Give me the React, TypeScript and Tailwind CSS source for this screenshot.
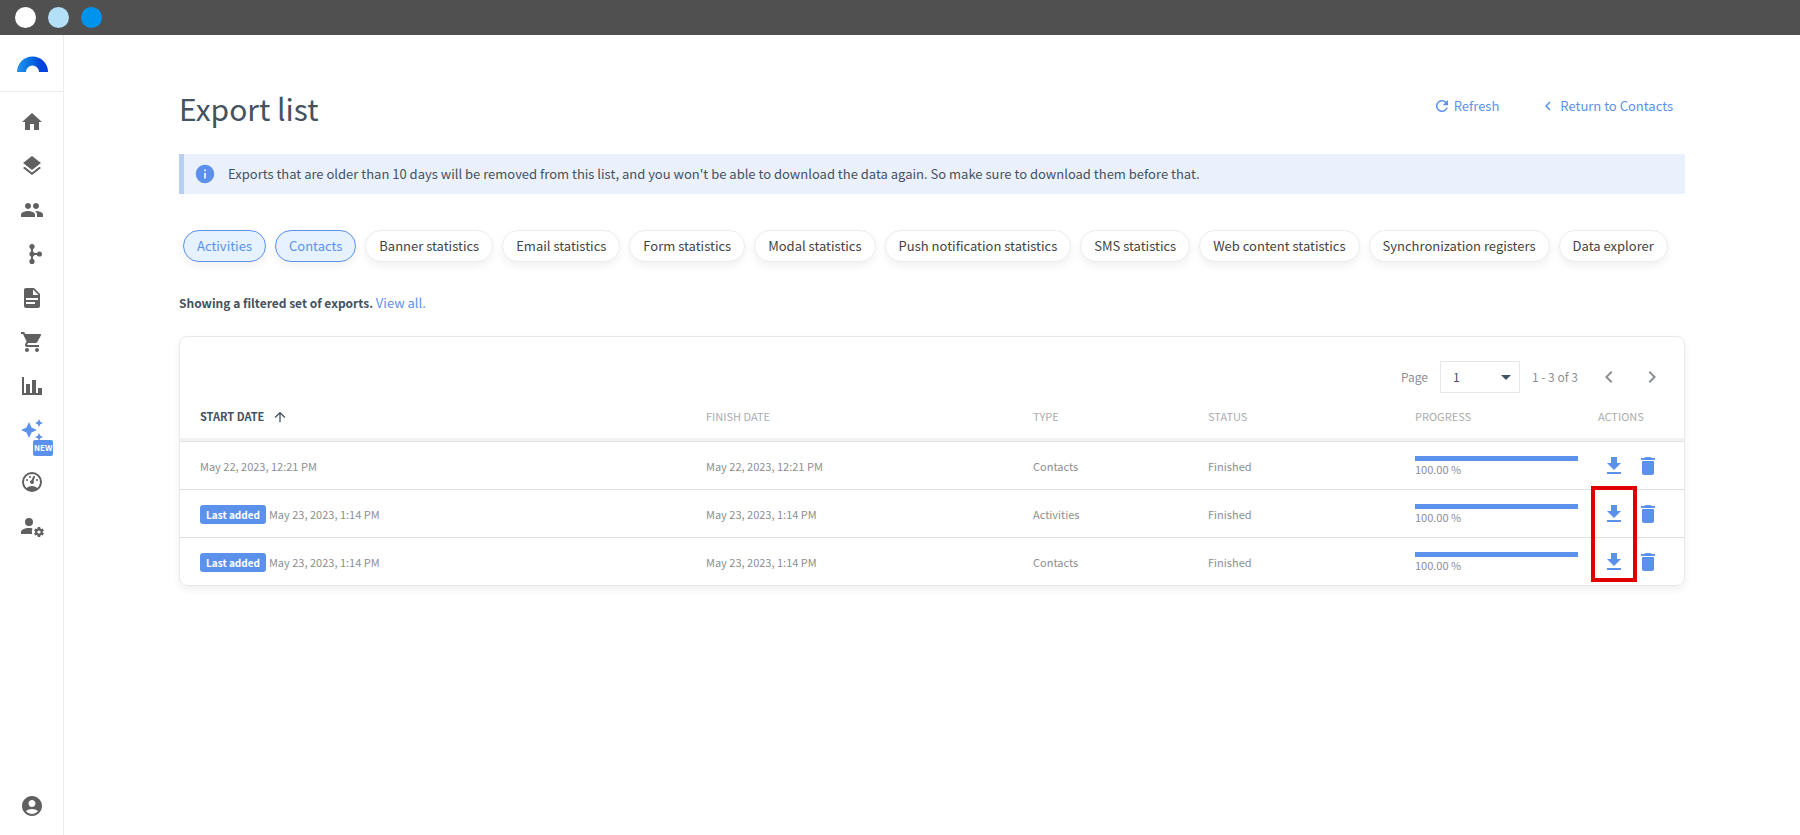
import clsx from "clsx";
import type { ReactNode } from "react";
import {
  MdAccountCircle,
  MdArrowDropDown,
  MdArrowUpward,
  MdAutoAwesome,
  MdChevronLeft,
  MdChevronRight,
  MdDelete,
  MdFileDownload,
  MdHome,
  MdInfo,
  MdLayers,
  MdPeople,
  MdRefresh,
  MdShoppingCart,
} from "react-icons/md";

const Svg = ({ children }: { children: ReactNode }) => (
  <svg viewBox="0 0 24 24" width="24" height="24" fill="currentColor">
    {children}
  </svg>
);

const ScenarioIcon = () => (
  <Svg>
    <circle cx="12" cy="4.6" r="2.6" />
    <circle cx="12" cy="12" r="2.6" />
    <circle cx="12" cy="19.4" r="2.6" />
    <circle cx="19.4" cy="12" r="2.6" />
    <path d="M11 5h2v6h6v2h-6v6h-2z" />
  </Svg>
);

const DocumentIcon = () => (
  <Svg>
    <path d="M13 9h5.5L13 3.5V9M6 2h8l6 6v12a2 2 0 0 1-2 2H6a2 2 0 0 1-2-2V4c0-1.11.89-2 2-2m9 16v-2H6v2h9m3-4v-2H6v2h12z" />
  </Svg>
);

const ChartIcon = () => (
  <Svg>
    <path d="M22 21H2V3h2v16h2v-9h4v9h2V6h4v13h2v-5h4v7z" />
  </Svg>
);

const GaugeIcon = () => (
  <Svg>
    <path
      fillRule="evenodd"
      d="M12 2a10 10 0 1 0 0 20 10 10 0 0 0 0-20m0 2a8 8 0 0 1 8 8c0 2.4-1 4.5-2.7 6-1.4-1.3-3.3-2-5.3-2s-3.8.7-5.3 2C5 16.5 4 14.4 4 12a8 8 0 0 1 8-8z"
    />
    <path d="M14 5.89c-.38.01-.74.26-.9.65l-1.29 3.23-.1.23c-.71.13-1.3.6-1.57 1.26a2 2 0 1 0 3.72 1.48c.26-.66.14-1.42-.29-1.98l.1-.26 1.29-3.21.01-.03c.2-.51-.05-1.09-.56-1.3-.13-.05-.26-.07-.41-.07z" />
    <circle cx="10" cy="7" r="1" />
    <circle cx="7" cy="10" r="1" />
    <circle cx="17" cy="10" r="1" />
  </Svg>
);

const UserSettingsIcon = () => (
  <Svg>
    <path d="M9 4a4 4 0 1 0 0 8 4 4 0 0 0 0-8M9 14c-4.42 0-8 1.79-8 4v2h11.2a7 7 0 0 1 .3-5.6C11.5 14.1 10.2 14 9 14z" />
    <path
      fillRule="evenodd"
      transform="translate(1 1)"
      d="M17 12c-.13 0-.24.09-.26.21l-.19 1.32c-.3.13-.59.29-.85.47l-1.24-.5c-.11 0-.24 0-.31.13l-1 1.73c-.06.11-.04.24.06.32l1.06.82a4.2 4.2 0 0 0 0 1l-1.06.82c-.09.08-.12.21-.06.32l1 1.73c.06.13.19.13.31.13l1.24-.5c.26.18.54.35.85.47l.19 1.32c.02.12.12.21.26.21h2c.11 0 .22-.09.24-.21l.19-1.32c.3-.13.57-.29.84-.47l1.23.5c.13 0 .26 0 .33-.13l1-1.73c.06-.11.03-.24-.06-.32l-1.07-.82a4.2 4.2 0 0 0 0-1l1.06-.82c.09-.08.12-.21.06-.32l-1-1.73c-.06-.13-.19-.13-.32-.13l-1.23.5c-.27-.18-.54-.35-.85-.47l-.19-1.32c-.01-.12-.12-.21-.23-.21h-2m1 3.4a1.6 1.6 0 1 1 0 3.2 1.6 1.6 0 0 1 0-3.200z"
    />
  </Svg>
);

const Logo = () => (
  <svg viewBox="0 0 31 16" width="31" height="16">
    <defs>
      <linearGradient id="logo" x1="0" x2="1">
        <stop offset="0" stopColor="#2a94ec" />
        <stop offset="0.5" stopColor="#0068e0" />
        <stop offset="0.75" stopColor="#0044da" />
        <stop offset="1" stopColor="#0040e0" />
      </linearGradient>
    </defs>
    <path
      fill="url(#logo)"
      d="M0 16a15.500 15.500 0 0 1 31 0h-9a6.500 6.500 0 0 0-13 0z"
    />
  </svg>
);

const navItems = [
  { label: "Home", icon: <MdHome size={24} /> },
  { label: "Data & Assets", icon: <MdLayers size={24} /> },
  { label: "Contacts", icon: <MdPeople size={24} /> },
  { label: "Scenarios", icon: <ScenarioIcon /> },
  { label: "Campaigns", icon: <DocumentIcon /> },
  { label: "Catalogs", icon: <MdShoppingCart size={24} /> },
  { label: "Analyses", icon: <ChartIcon /> },
];

const filters = [
  { label: "Activities", active: true },
  { label: "Contacts", active: true },
  { label: "Banner statistics" },
  { label: "Email statistics" },
  { label: "Form statistics" },
  { label: "Modal statistics" },
  { label: "Push notification statistics" },
  { label: "SMS statistics" },
  { label: "Web content statistics" },
  { label: "Synchronization registers" },
  { label: "Data explorer" },
];

const rows = [
  { date: "May 22, 2023, 12:21 PM", type: "Contacts", status: "Finished", progress: 100 },
  { date: "May 23, 2023, 1:14 PM", type: "Activities", status: "Finished", progress: 100, last: true },
  { date: "May 23, 2023, 1:14 PM", type: "Contacts", status: "Finished", progress: 100, last: true },
];

function Sidebar() {
  return (
    <aside className="flex w-16 shrink-0 flex-col border-r border-[#ececec] text-[#606060]">
      <a
        href="#"
        aria-label="Dashboard"
        className="flex h-[57px] items-center justify-center border-b border-[#ececec] pt-0.5 pl-0.5"
      >
        <Logo />
      </a>
      <nav className="flex flex-1 flex-col items-center gap-5 pt-[18px] pb-[17px] pl-px">
        {navItems.map((item) => (
          <a key={item.label} href="#" aria-label={item.label}>
            {item.icon}
          </a>
        ))}
        <a href="#" aria-label="Insights" className="relative mb-2 text-[#5c91eb]">
          <MdAutoAwesome size={24} />
          <span className="absolute top-[22px] left-[13px] rounded-xs bg-[#5c91eb] px-px text-[8px] leading-4 font-bold text-white">
            NEW
          </span>
        </a>
        <a href="#" aria-label="Dashboards">
          <GaugeIcon />
        </a>
        <a href="#" aria-label="User management">
          <UserSettingsIcon />
        </a>
        <a href="#" aria-label="Account" className="mt-auto">
          <MdAccountCircle size={24} />
        </a>
      </nav>
    </aside>
  );
}

function Pagination() {
  return (
    <div className="flex items-center justify-end pr-5 text-[12px] text-[#8b8f93]">
      <label htmlFor="page">Page</label>
      <div className="relative mx-3 text-[#455260]">
        <select
          id="page"
          className="block h-8 w-20 appearance-none border border-[#e8e8e8] bg-white pl-3"
        >
          <option>1</option>
        </select>
        <MdArrowDropDown
          size={24}
          className="pointer-events-none absolute top-1 right-0.5"
        />
      </div>
      <span>1 - 3 of 3</span>
      <button type="button" aria-label="Previous page" className="ml-[19px]">
        <MdChevronLeft size={24} />
      </button>
      <button type="button" aria-label="Next page" className="ml-[19px]">
        <MdChevronRight size={24} />
      </button>
    </div>
  );
}

function ExportTable() {
  return (
    <table className="w-full table-fixed border-separate border-spacing-0 text-left text-[11px] text-[#8b8f93]">
      <colgroup>
        <col />
        <col className="w-[327px]" />
        <col className="w-[175px]" />
        <col className="w-[207px]" />
        <col className="w-[183px]" />
        <col className="w-[106px]" />
      </colgroup>
      <thead>
        <tr className="h-12 text-[#a9acaf] [&>th]:border-b-[3px] [&>th]:border-[#f1f2f3] [&>th]:pt-0.5 [&>th]:pl-5 [&>th]:font-normal">
          <th>
            <button
              type="button"
              className="flex items-center gap-2 font-bold text-[#455260]"
            >
              START DATE
              <MdArrowUpward size={16} />
            </button>
          </th>
          <th>FINISH DATE</th>
          <th>TYPE</th>
          <th>STATUS</th>
          <th>PROGRESS</th>
          <th>ACTIONS</th>
        </tr>
      </thead>
      <tbody>
        {rows.map((row, i) => (
          <tr
            key={i}
            className="h-12 [&>td]:border-t [&>td]:border-[#e0e1e3] [&>td]:pl-5 [&>td:not(:last-child)]:pt-0.5"
          >
            <td>
              <div className="flex items-center gap-[3px]">
                {row.last && (
                  <span className="rounded-[3px] bg-[#5c91eb] px-1.5 text-[10px] leading-[19px] font-bold text-white">
                    Last added
                  </span>
                )}
                {row.date}
              </div>
            </td>
            <td>{row.date}</td>
            <td>{row.type}</td>
            <td>{row.status}</td>
            <td>
              <div className="h-[5px] bg-[#e8eaed]">
                <div
                  className="h-full bg-[#5c91eb]"
                  style={{ width: `${row.progress}%` }}
                />
              </div>
              <p className="leading-4">{row.progress.toFixed(2)} %</p>
            </td>
            <td>
              <div className="flex items-center gap-[10px] pl-1 text-[#5c91eb]">
                <button type="button" aria-label="Download">
                  <MdFileDownload size={24} />
                </button>
                <button type="button" aria-label="Delete">
                  <MdDelete size={24} />
                </button>
              </div>
            </td>
          </tr>
        ))}
      </tbody>
    </table>
  );
}

export default function App() {
  return (
    <div className="flex min-h-screen flex-col bg-white font-['Noto_Sans_CJK_SC','Noto_Sans',sans-serif] text-[#455260]">
      {/* Window bar */}
      <div className="flex h-[35px] shrink-0 items-center gap-3 bg-[#505050] px-[15px]">
        <span className="h-[21px] w-[21px] rounded-full bg-white" />
        <span className="h-[21px] w-[21px] rounded-full bg-[#b3dff9]" />
        <span className="h-[21px] w-[21px] rounded-full bg-[#0093ee]" />
      </div>

      <div className="flex flex-1">
        <Sidebar />

        <main className="min-w-0 flex-1 px-[115px] pt-[51px] pb-10">
          <header className="flex justify-between">
            <h1 className="text-[30px] leading-[44px]">Export list</h1>
            <div className="flex items-start gap-10 pt-[10px] pr-3 text-[13px] leading-5 text-[#5c91eb]">
              <a href="#" className="flex items-center gap-[3px]">
                <MdRefresh size={18} />
                Refresh
              </a>
              <a href="#" className="flex items-center gap-[3px]">
                <MdChevronLeft size={18} />
                Return to Contacts
              </a>
            </div>
          </header>

          {/* Info banner */}
          <div className="mt-6 flex h-10 items-center gap-3 border-l-[5px] border-[#b7cff3] bg-[#eaf1fc] pl-[10px]">
            <MdInfo size={22} className="text-[#5c91eb]" />
            <p className="text-[13px]">
              Exports that are older than 10 days will be removed from this list, and
              you won't be able to download the data again. So make sure to download
              them before that.
            </p>
          </div>

          {/* Filters */}
          <div className="mt-9 flex flex-wrap gap-[9px] px-1">
            {filters.map((filter) => (
              <button
                key={filter.label}
                type="button"
                className={clsx(
                  "h-8 rounded-full border px-[13px] text-[13px] shadow-[0_4px_8px_rgba(0,0,0,0.06)]",
                  filter.active
                    ? "border-[#5c91eb] bg-[#e6f2ff] text-[#5c91eb]"
                    : "border-[#ededed] bg-white text-[#444444]"
                )}
              >
                {filter.label}
              </button>
            ))}
          </div>

          <p className="mt-[31px] text-[12px] leading-5 font-bold">
            Showing a filtered set of exports.{" "}
            <a href="#" className="text-[13px] leading-5 font-normal text-[#5c91eb]">
              View all.
            </a>
          </p>

          {/* Export list */}
          <section className="relative mt-[23px] rounded-lg border border-[#e8e8e8] pt-6 shadow-[0_4px_8px_rgba(0,0,0,0.06)]">
            <Pagination />
            <ExportTable />
            <div className="pointer-events-none absolute right-[47px] bottom-[3px] h-24 w-[46px] border-4 border-[#e00000]" />
          </section>
        </main>
      </div>
    </div>
  );
}
